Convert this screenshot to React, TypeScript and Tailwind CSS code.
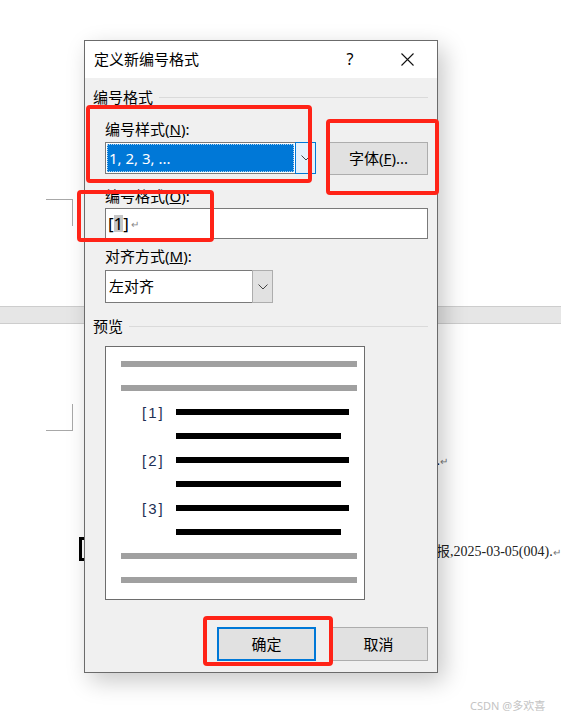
import React from 'react'

const font = "font-['Microsoft_YaHei','Noto_Sans','Noto_Sans_CJK_SC',sans-serif]"

function Chevron() {
  return (
    <svg width="10" height="6" viewBox="0 0 10 6" fill="none">
      <polyline points="0.5,0.5 5,5 9.5,0.5" stroke="#444" strokeWidth="1" />
    </svg>
  )
}

function GroupLabel({ text }: { text: string }) {
  return (
    <div className="flex items-center gap-[6px]">
      <span className="text-[15px] leading-[20px]">{text}</span>
      <div className="h-px flex-1 bg-[#dadada]" />
    </div>
  )
}

function PreviewLines() {
  const gray = <div className="h-[6px] w-[236px] bg-[#a0a0a0]" />
  const item = (n: number) => (
    <>
      <div className="flex h-[6px] items-center">
        <span className="ml-[21px] w-[34px] text-[15px] leading-none tracking-[2px] text-[#1d2f55] font-['Liberation_Sans_Narrow','Liberation_Sans',sans-serif]">
          [{n}]
        </span>
        <div className="h-[6px] w-[173px] bg-black" />
      </div>
      <div className="ml-[55px] h-[6px] w-[165px] bg-black" />
    </>
  )
  return (
    <div className="flex flex-col gap-[18px] pl-[15px] pt-[14px]">
      {gray}
      {gray}
      {item(1)}
      {item(2)}
      {item(3)}
      {gray}
      {gray}
    </div>
  )
}

export default function App() {
  return (
    <div className={`relative h-[719px] w-[561px] overflow-hidden bg-white text-black ${font}`}>
      {/* document behind the dialog */}
      <div className="mt-[306px] h-[18px] border-y border-[#cdcdcd] bg-[#e6e6e6]" />
      <div className="absolute left-[46px] top-[199px] h-[27px] w-[27px] border-r border-t border-[#a8a8a8]" />
      <div className="absolute left-[46px] top-[404px] h-[27px] w-[27px] border-b border-r border-[#a8a8a8]" />
      <div className="absolute left-[79px] top-[537px] h-[24px] w-[10px] border-y-[3px] border-l-[3px] border-black" />
      <div className="absolute left-[433px] top-[451px] text-[14px] leading-[20px] font-['Liberation_Serif','Noto_Sans_CJK_SC',serif]">
        ..<span className="text-[10px] text-[#777]">↵</span>
      </div>
      <div className="absolute left-[436px] top-[542px] text-[14px] leading-[20px] text-[#222] font-['Liberation_Serif','Noto_Sans_CJK_SC',serif]">
        报,2025-03-05(004).<span className="text-[10px] text-[#777]">↵</span>
      </div>
      <div className="absolute left-[470px] top-[699px] text-[11px] leading-[14px] text-[#c4c4c4]">CSDN @多欢喜</div>

      {/* dialog window */}
      <div className="absolute left-[84px] top-[40px] flex h-[633px] w-[354px] flex-col border border-[#6b6b6b] bg-[#f0f0f0] shadow-[6px_8px_22px_rgba(0,0,0,0.22)]">
        <div className="flex h-[37px] items-center bg-white pl-[9px] pr-[7px]">
          <span className="-mt-[2px] flex-1 text-[15px] leading-[20px]">定义新编号格式</span>
          <span className="-mt-[2px] flex w-[46px] justify-center text-[16px] leading-[20px]">?</span>
          <span className="-mt-[1px] ml-[11px] flex w-[46px] justify-center">
            <svg width="13" height="13" viewBox="0 0 13 13">
              <path d="M0.5 0.5 L12.5 12.5 M12.5 0.5 L0.5 12.5" stroke="#111" strokeWidth="1.1" />
            </svg>
          </span>
        </div>

        <div className="flex flex-1 flex-col pl-[8px] pr-[9px] pt-[9px]">
          <GroupLabel text="编号格式" />
          <div className="flex flex-col pl-[12px]">
            <div className="mt-[12px] text-[15px] leading-[20px]">
              编号样式(<span className="underline">N</span>):
            </div>
            <div className="mt-[3px] flex items-start gap-[13px]">
              <div className="flex h-[32px] w-[211px] border border-[#7a7a7a] bg-white">
                <div className="m-px flex flex-1 items-center bg-[#0078d7] pl-[2px] text-[15px] text-white outline-1 outline-dotted outline-[#ffffffaa] -outline-offset-1">
                  1, 2, 3, ...
                </div>
                <div className="-my-px -mr-px flex w-[21px] items-center justify-center border border-[#0078d7] bg-[#e5f1fb]">
                  <Chevron />
                </div>
              </div>
              <div className="flex h-[33px] w-[99px] items-center justify-center border border-[#adadad] bg-[#e1e1e1] text-[15px]">
                字体(<span className="underline">F</span>)...
              </div>
            </div>

            <div className="mt-[11px] text-[15px] leading-[20px]">
              编号格式(<span className="underline">O</span>):
            </div>
            <div className="mt-[2px] flex h-[31px] w-[323px] items-center border border-[#7a7a7a] bg-white pl-[2px] text-[17px] leading-none">
              <span>[</span>
              <span className="bg-[#c6c6c6]">1</span>
              <span>]</span>
              <span className="ml-[2px] text-[10px] text-[#888]">↵</span>
            </div>

            <div className="mt-[7px] text-[15px] leading-[20px]">
              对齐方式(<span className="underline">M</span>):
            </div>
            <div className="mt-[4px] flex h-[33px] w-[168px] border border-[#7a7a7a] bg-white">
              <div className="flex flex-1 items-center pl-[3px] text-[15px]">左对齐</div>
              <div className="-my-px -mr-px flex w-[21px] items-center justify-center border border-[#adadad] bg-[#e1e1e1]">
                <Chevron />
              </div>
            </div>
          </div>

          <div className="mt-[13px]">
            <GroupLabel text="预览" />
          </div>
          <div className="ml-[12px] mt-[10px] h-[254px] w-[260px] border border-[#6d6d6d] bg-white">
            <PreviewLines />
          </div>

          <div className="mt-[27px] flex justify-end gap-[13px]">
            <div className="flex h-[34px] w-[99px] items-center justify-center border-2 border-[#0078d7] bg-[#e1e1e1] text-[15px]">
              确定
            </div>
            <div className="flex h-[34px] w-[99px] items-center justify-center border border-[#adadad] bg-[#e1e1e1] text-[15px]">
              取消
            </div>
          </div>
        </div>
      </div>

      {/* red annotation boxes */}
      <div className="absolute left-[86px] top-[105px] h-[78px] w-[226px] rounded-[4px] border-[4px] border-[#ff2317]" />
      <div className="absolute left-[326px] top-[119px] h-[76px] w-[113px] rounded-[4px] border-[4px] border-[#ff2317]" />
      <div className="absolute left-[77px] top-[190px] h-[52px] w-[137px] rounded-[4px] border-[4px] border-[#ff2317]" />
      <div className="absolute left-[203px] top-[616px] h-[50px] w-[130px] rounded-[4px] border-[4px] border-[#ff2317]" />
    </div>
  )
}
